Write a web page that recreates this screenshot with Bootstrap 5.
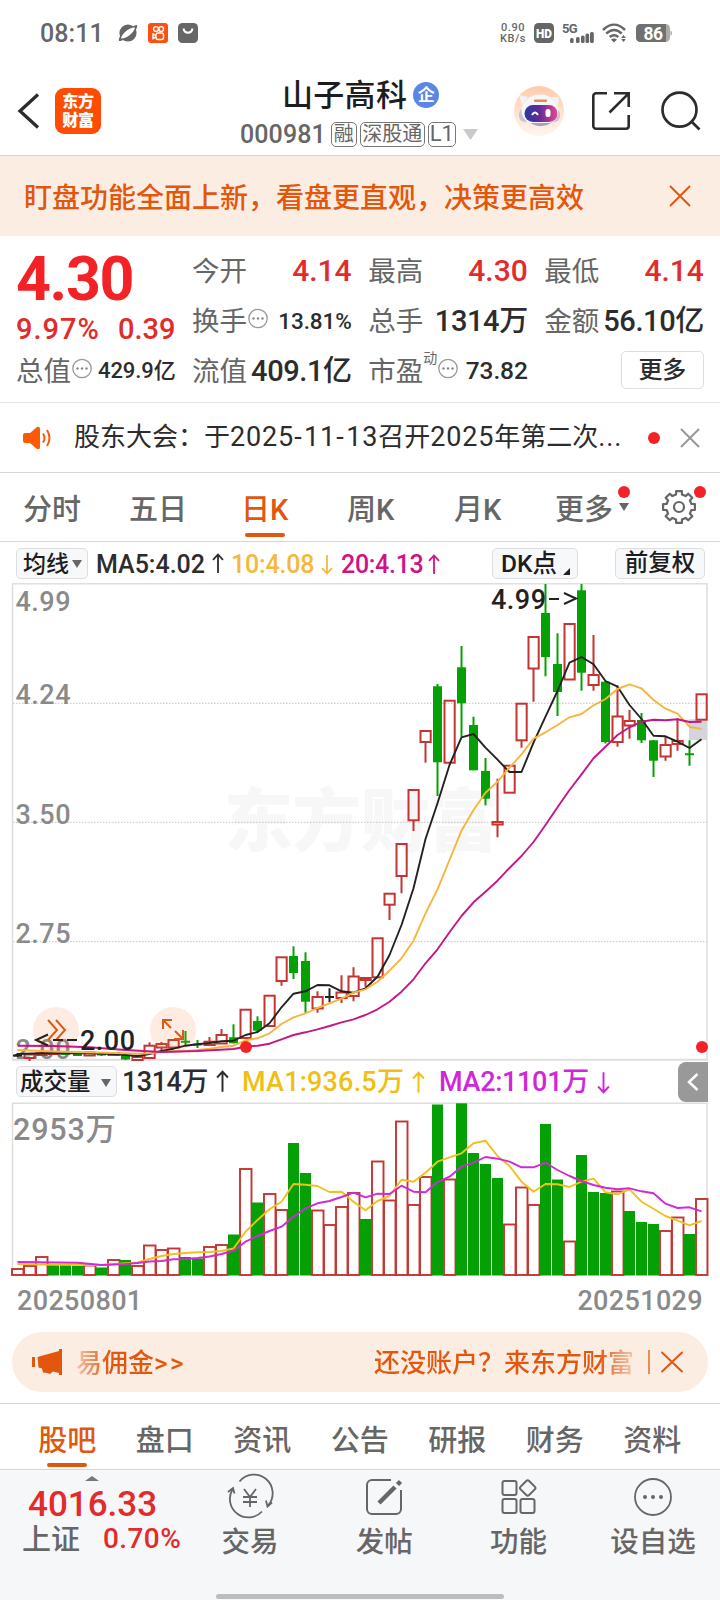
<!DOCTYPE html>
<html lang="zh-CN">
<head>
<meta charset="utf-8">
<meta name="viewport" content="width=device-width, initial-scale=1">
<title>山子高科 000981</title>
<link href="https://cdn.jsdelivr.net/npm/bootstrap@5.3.0/dist/css/bootstrap.min.css" rel="stylesheet">
<style>
:root{--or:#e2570e;--red:#e32b2b;--g6:#666;--ink:#2c2c2e}
body{width:720px;height:1600px;overflow:hidden;background:#fff;color:var(--ink);font-family:Roboto,"Noto Sans CJK SC",sans-serif;font-weight:400;line-height:1}
svg{display:block;flex:none;overflow:visible}
span,b,div{white-space:nowrap}
.statusrow{height:66px;padding:0 48px 0 40px;color:var(--g6)}
.clock{font-size:25px;font-weight:500;width:78px;letter-spacing:.1px}
.speed{font-size:11px;line-height:11px;font-weight:500;width:28px;letter-spacing:.5px}
.speed span{display:block;height:11px}
.header{height:90px;border-bottom:1px solid #d6d6d6}
.apptile{width:46px;height:46px;border-radius:9px;background:#ff4c04;color:#fff;font-size:16px;font-weight:900;line-height:19px;padding-top:4px;letter-spacing:-.2px}
.stockname{font-size:31px;line-height:38px;font-weight:500;color:#1d1d1f;letter-spacing:.3px;padding-top:2px}
.corp{width:26px;height:26px;border-radius:50%;background:#5c86e6;color:#fff;font-size:17px;font-weight:700;margin-left:6px}
.code{font-size:25px;font-weight:500;letter-spacing:.1px;color:var(--g6)}
.mk{border:1.3px solid #777;border-radius:5px;font-size:20px;height:25px;line-height:22px;color:var(--g6);text-align:center}
.notice{height:80px;background:#fcede3;color:var(--or);font-size:28px;font-weight:500;padding:0 28px 0 24px}
.notice span{padding-top:6px}
.quote{height:167px;border-bottom:1px solid #e8e8e8;padding:9px 16px 0 17px;display:grid;grid-template-columns:repeat(4,158.6px);column-gap:17.5px;grid-template-rows:50px 50px 50px}
.lbl{font-size:27.5px;color:var(--g6);font-weight:400;padding-top:3px;margin-left:-1px}
.v{font-weight:500;font-size:29px;letter-spacing:-.4px;padding-top:2px}
.v.rd{color:var(--red);font-size:30px;letter-spacing:0}
.v.sm{font-size:22.5px;letter-spacing:-.1px}
.quote svg{margin-left:1px}
.bigp{font-size:61px;font-weight:700;color:#f22226;line-height:68px;letter-spacing:-1.4px;margin-left:-1px}
.chg{font-size:29px;font-weight:500;color:var(--red);line-height:32px;margin-left:-1px}
.morebtn{width:83px;height:38px;border:1px solid #ddd;border-radius:5px;font-size:24px;font-weight:500;margin-left:auto}
.news{height:70px;border-bottom:1px solid #d6d6d6;padding:0 20px 0 22px;font-size:26px}
.news i{font-style:normal;font-size:27px;letter-spacing:.85px}
.dot{width:12px;height:12px;border-radius:50%;background:#f22226;flex:none}
.periods{height:69px;border-bottom:1px solid #d6d6d6;font-size:29px;color:var(--g6);font-weight:500;padding-left:23px}
.periods>div{position:relative;line-height:69px;height:69px;padding-top:3px}
.active{color:var(--or)}
.active::after{content:"";position:absolute;left:50%;margin-left:-20px;width:40px;height:4px;border-radius:2px;background:var(--or)}
.periods .active::after{top:57px}
.pill{background:#f6f8fa;border:1px solid #dcdee2;border-radius:5px;height:31px;font-weight:500;color:#1d1d1f;padding-top:2px}
.marow{height:41px;font-size:25px;font-weight:500;padding:1px 0 0 16px}
.marow>span:not(.pill),.volrow>span:not(.pill):not(.handle){padding-top:2px}
.volrow{height:43px;font-size:27px;font-weight:500;padding-left:16px}
.handle{width:30px;height:40px;background:#999;border-radius:8px 0 0 8px}
.dates{height:56px;font-size:27px;font-weight:500;color:#8a8a8a;padding:12px 17px 0 17px;letter-spacing:.35px}
.promo{height:60px;margin:0 12px;border-radius:30px;background:#fcede3;color:var(--or);font-size:26px;font-weight:500;padding-left:20px}
.promo span{padding-top:2px}
.fadel{background:linear-gradient(90deg,#e2570e40 0,#e2570e 32px);-webkit-background-clip:text;color:transparent}
.fader{background:linear-gradient(90deg,#e2570e 225px,#e2570e30 262px);-webkit-background-clip:text;color:transparent}
.sections{height:67px;margin-top:11px;border-top:1px solid #d6d6d6;border-bottom:1px solid #d6d6d6;font-size:29px;font-weight:500;color:var(--g6);padding:0 18px 0 19px}
.sections>div{width:97.5px;text-align:center;line-height:75px;position:relative;margin-left:-.5px;margin-right:.5px}
.sections .active::after{top:59px}
.dock{height:131px;background:#f6f7f9;color:var(--g6);position:relative}
.dock .ico{width:134.3px;font-size:28.5px;font-weight:500;padding-top:7px}
.dock .ico span{margin-top:12px}
.home{position:absolute;left:216px;bottom:2px;width:288px;height:5px;border-radius:3px;background:#bdbdbf}
</style>
</head>
<body>
<div class="statusrow d-flex align-items-center">
  <span class="clock">08:11</span>
  <svg width="20" height="20" viewBox="0 0 20 20"><circle cx="10" cy="10" r="8.6" fill="#666"/><path d="M1 18C-1 13 12 3 19 2c2 5-11 16-18 16z" fill="#666"/><path d="M3 15.500C4 10 12 4 17 4.500 16 10 8 16 3 15.500z" fill="#fff"/></svg>
  <svg style="margin-left:10px" width="20" height="20" viewBox="0 0 20 20"><rect width="20" height="20" rx="3" fill="#fa5011"/><g fill="none" stroke="#fff" stroke-width="1.400"><circle cx="8" cy="6" r="2.400"/><circle cx="13.200" cy="6" r="2.400"/><rect x="8" y="10" width="7.500" height="6.500" rx="2"/><path d="M8 12.500l-3-1.500v4.500l3-1.500"/></g></svg>
  <svg style="margin-left:10px" width="20" height="20" viewBox="0 0 20 20"><rect width="20" height="20" rx="4.500" fill="#666"/><path d="M5.500 5.500c1 5.500 8 5.500 9 0" fill="none" stroke="#fff" stroke-width="2"/></svg>
  <div class="speed ms-auto text-center"><span>0.90</span><span>KB/s</span></div>
  <svg style="margin-left:7px" width="20" height="20" viewBox="0 0 20 20"><rect width="20" height="20" rx="4.500" fill="#666"/><text x="2" y="14.500" font-size="12.500" font-weight="900" fill="#fff" textLength="16" lengthAdjust="spacingAndGlyphs">HD</text></svg>
  <svg style="margin-left:8px" width="32" height="20" viewBox="0 0 32 20" fill="#666"><text x="0" y="9.500" font-size="13" font-weight="700" textLength="15.500">5G</text><rect x="8" y="15" width="3.600" height="5" rx="1.500"/><rect x="14" y="14" width="3.600" height="6" rx="1.500"/><rect x="19" y="12.500" width="3.600" height="7.500" rx="1.500"/><rect x="23.500" y="10.500" width="3.600" height="9.500" rx="1.500"/><rect x="28" y="9" width="3.800" height="11" rx="1.500"/></svg>
  <svg style="margin-left:8px" width="24" height="20" viewBox="0 0 24 20"><g fill="none" stroke="#666" stroke-width="2.500"><path d="M1 7C8 0 16 0 23 7M4.300 10.500c5-4.500 10.500-4.500 15.400 0M7.700 14c3-2.500 5.500-2.500 8.600 0"/></g><path d="M12 19.500l-3-3q3-2 6 0zM21.500 12l2.300 3h-4.600zM21.500 19l2.300-3h-4.600z" fill="#666"/></svg>
  <svg style="margin-left:10px" width="36" height="20" viewBox="0 0 36 20"><rect y="1" width="34" height="18" rx="4.500" fill="#aaa"/><path d="M4.500 1H30v18H4.500A4.500 4.500 0 0 1 0 14.500v-9A4.500 4.500 0 0 1 4.500 1z" fill="#707070"/><path d="M34.500 7.500q1.500 0 1.500 2.500t-1.500 2.500z" fill="#aaa"/><text x="7.500" y="16.500" font-size="17.500" font-weight="700" fill="#fff" textLength="19.500">86</text></svg>
</div>

<div class="header d-flex">
  <svg style="margin:27px 0 0 17px" width="22" height="36" viewBox="0 0 22 36"><path d="M21 1.500L3 18l18 16.500" fill="none" stroke="#2c2c2e" stroke-width="3.300"/></svg>
  <div class="apptile text-center" style="margin:22px 0 0 16px">东方<br>财富</div>
  <div class="d-flex flex-column" style="margin:9px 0 0 139px;width:251px">
    <div class="d-flex align-items-center" style="margin-left:42px;height:40px"><span class="stockname">山子高科</span><span class="corp d-flex align-items-center justify-content-center">企</span></div>
    <div class="d-flex align-items-center" style="height:36px;margin-top:1px"><span class="code">000981</span><span class="mk" style="width:26px;margin-left:5px">融</span><span class="mk" style="width:65px;margin-left:3px">深股通</span><span class="mk" style="width:28px;margin-left:3px;font-size:22px">L1</span><svg style="margin-left:7px" width="15" height="11"><path d="M0 0h15l-7.500 11z" fill="#c9c9c9"/></svg></div>
  </div>
  <svg style="margin:19px 0 0 23px" width="50" height="52" viewBox="0 0 50 52"><defs><linearGradient id="bg1" x1="0" y1="0" x2="0" y2="1"><stop offset="0" stop-color="#ffcbab"/><stop offset="1" stop-color="#fff5f0"/></linearGradient><linearGradient id="bg2"><stop offset="0" stop-color="#293a9c"/><stop offset=".45" stop-color="#632a98"/><stop offset="1" stop-color="#e4488f"/></linearGradient></defs><circle cx="25" cy="26" r="25" fill="url(#bg1)"/><path d="M5 10l9 2-6 8zM45 12l-8 0 7 8z" fill="#f3f2f5"/><rect x="5" y="23" width="41" height="14" rx="6" fill="#c7c5d2"/><ellipse cx="26" cy="25.500" rx="18.500" ry="16" fill="#f6f5f7"/><path d="M11 34q15 14 30 1l-5 3H16z" fill="#a9a4b5"/><rect x="10.500" y="20" width="33" height="17" rx="8.500" fill="url(#bg2)"/><path d="M18 30q3-5 6 0" fill="none" stroke="#fff" stroke-width="2"/><rect x="31.500" y="24" width="5" height="8" rx="2.500" fill="#fff"/><rect x="20" y="14.500" width="13" height="2.400" rx="1" fill="#df8c54"/></svg>
  <svg style="margin:26px 0 0 28px" width="38" height="38" viewBox="0 0 38 38" fill="none" stroke="#2c2c2e" stroke-width="2.600"><path d="M15 1.300H4A2.700 2.700 0 0 0 1.300 4v30A2.700 2.700 0 0 0 4 36.700h30a2.700 2.700 0 0 0 2.700-2.700V23M22 1.300h14.700V15M36.700 1.300L17.500 20.500"/></svg>
  <svg style="margin:25px 0 0 31px" width="40" height="40" viewBox="0 0 40 40" fill="none" stroke="#2c2c2e" stroke-width="2.700"><circle cx="18.500" cy="18.700" r="17"/><path d="M30.500 30.500l8 8"/></svg>
</div>

<div class="notice d-flex align-items-center justify-content-between"><span>盯盘功能全面上新，看盘更直观，决策更高效</span><svg width="24" height="24" viewBox="0 0 24 24"><path d="M2 2l20 20M22 2L2 22" stroke="#e2570e" stroke-width="2"/></svg></div>

<div class="quote">
  <div style="grid-row:1/3"><div class="bigp">4.30</div><div class="chg d-flex justify-content-between"><span style="letter-spacing:1px">9.97%</span><span>0.39</span></div></div>
  <div class="d-flex align-items-center justify-content-between"><span class="lbl">今开</span><span class="v rd">4.14</span></div>
  <div class="d-flex align-items-center justify-content-between"><span class="lbl">最高</span><span class="v rd">4.30</span></div>
  <div class="d-flex align-items-center justify-content-between"><span class="lbl">最低</span><span class="v rd">4.14</span></div>
  <div class="d-flex align-items-center"><span class="lbl">换手</span><svg width="20" height="20" viewBox="0 0 20 20"><use href="#ell"/></svg><span class="v sm ms-auto">13.81%</span></div>
  <div class="d-flex align-items-center justify-content-between"><span class="lbl">总手</span><span class="v">1314万</span></div>
  <div class="d-flex align-items-center justify-content-between"><span class="lbl">金额</span><span class="v">56.10亿</span></div>
  <div class="d-flex align-items-center"><span class="lbl">总值</span><svg width="20" height="20" viewBox="0 0 20 20"><g id="ell"><circle cx="10" cy="8.500" r="9.200" fill="none" stroke="#999" stroke-width="1.300"/><g fill="#888"><circle cx="5.500" cy="8.500" r="1.200"/><circle cx="10" cy="8.500" r="1.200"/><circle cx="14.500" cy="8.500" r="1.200"/></g></g></svg><span class="v sm ms-auto" style="font-size:22px">429.9亿</span></div>
  <div class="d-flex align-items-center justify-content-between"><span class="lbl">流值</span><span class="v">409.1亿</span></div>
  <div class="d-flex align-items-center"><span class="lbl">市盈</span><span style="font-size:14px;align-self:flex-start;margin-top:6px;color:#666">动</span><svg width="20" height="20" viewBox="0 0 20 20"><use href="#ell"/></svg><span class="v sm ms-auto" style="font-size:24.500px">73.82</span></div>
  <div class="d-flex align-items-center"><span class="morebtn d-flex align-items-center justify-content-center">更多</span></div>
</div>

<div class="news d-flex align-items-center">
  <svg width="30" height="24" viewBox="0 0 30 24"><path d="M1 9q0-2 2-2h5l7-6q3-1 3 2v18q0 3-3 2l-7-6H3q-2 0-2-2z" fill="#fb5b08"/><path d="M21 7.500q3 4.500 0 9M25 4q5 8 0 16" fill="none" stroke="#fb5b08" stroke-width="2"/></svg>
  <span style="margin-left:22px">股东大会：于<i>2025<i style="letter-spacing:2.500px">-</i>11<i style="letter-spacing:2.500px">-</i>13</i>召开<i>2025</i>年第二次<i>...</i></span>
  <span class="dot ms-auto"></span>
  <svg style="margin-left:20px" width="20" height="20" viewBox="0 0 20 20"><path d="M1 1l18 18M19 1L1 19" stroke="#999" stroke-width="2"/></svg>
</div>

<div class="periods d-flex align-items-center">
  <div style="width:106px">分时</div><div style="width:113px">五日</div><div style="width:105px"><div class="active position-relative" style="width:48px;height:66px;line-height:69px;margin-left:-1px">日K</div></div><div style="width:107px">周K</div><div style="width:101px">月K</div>
  <div style="width:106px">更多<span class="dot position-absolute" style="left:63px;top:13px"></span><svg class="position-absolute" style="left:64px;top:30px" width="10" height="8"><path d="M0 0h10L5 8z" fill="#666"/></svg></div>
  <div><svg style="margin-top:13px" width="36" height="36" viewBox="-18 -18 36 36"><path id="gear" fill="none" stroke="#666" stroke-width="2.200" stroke-linejoin="round"/><circle r="5" fill="none" stroke="#666" stroke-width="2.200"/></svg><span class="dot position-absolute" style="left:33px;top:13px"></span></div>
</div>

<svg width="0" height="0" class="position-absolute"><defs><path id="up" d="M6 20V1.500M1 6.800L6 1.500l5 5.300" fill="none" stroke="currentColor" stroke-width="1.800"/><path id="dn" d="M6 1v18.500M1 14.200l5 5.300 5-5.300" fill="none" stroke="currentColor" stroke-width="1.800"/></defs></svg>

<div class="marow d-flex align-items-center">
  <span class="pill d-flex align-items-center" style="width:72px;font-size:23px;padding-left:6px">均线<svg style="margin-left:3px" width="10" height="8"><path d="M0 0h10L5 8z" fill="#666"/></svg></span>
  <span style="margin-left:8px;width:116px">MA5:4.02</span><svg width="12" height="21"><use href="#up"/></svg>
  <span class="d-flex" style="color:#f5b83d;margin-left:7px"><span style="width:90px;letter-spacing:-.2px">10:4.08</span><svg width="12" height="21" style="margin-top:2px"><use href="#dn"/></svg></span>
  <span class="d-flex" style="color:#d01285;margin-left:8px"><span style="width:87px;letter-spacing:-.3px">20:4.13</span><svg width="12" height="21" style="margin-top:2px"><use href="#up"/></svg></span>
  <span class="pill d-flex align-items-center" style="margin-left:52px;width:86px;padding-left:8px;font-size:24.500px">DK点<svg style="margin:14px 0 0 6px" width="7" height="7"><path d="M7 0v7H0z" fill="#222"/></svg></span>
  <span class="pill d-flex align-items-center justify-content-center" style="margin-left:37px;width:90px;font-size:23.500px">前复权</span>
</div>

<svg id="price" width="720" height="477" viewBox="0 583 720 477"></svg>

<div class="volrow d-flex align-items-center">
  <span class="pill d-flex align-items-center" style="width:101px;font-size:23.500px;padding-left:3px">成交量<svg style="margin-left:10px" width="10" height="8"><path d="M0 0h10L5 8z" fill="#666"/></svg></span>
  <span style="margin-left:5px;width:94px;letter-spacing:-.5px">1314万</span><svg width="13" height="23" viewBox="0 0 12 21"><use href="#up"/></svg>
  <span class="d-flex" style="color:#f0bf14;margin-left:13px"><span style="width:170px;letter-spacing:.2px">MA1:936.5万</span><svg width="13" height="23" viewBox="0 0 12 21" style="margin-top:2px"><use href="#up"/></svg></span>
  <span class="d-flex" style="color:#d027d8;margin-left:14px"><span style="width:158px;letter-spacing:-.3px">MA2:1101万</span><svg width="13" height="23" viewBox="0 0 12 21" style="margin-top:2px"><use href="#dn"/></svg></span>
  <span class="handle d-flex align-items-center justify-content-center ms-auto" style="margin-right:12px"><svg width="12" height="18"><path d="M10.500 1L2 9l8.500 8" fill="none" stroke="#fff" stroke-width="2.500"/></svg></span>
</div>

<svg id="volume" width="720" height="173" viewBox="0 1103 720 173"></svg>

<div class="dates d-flex justify-content-between"><span>20250801</span><span>20251029</span></div>

<div class="promo d-flex align-items-center">
  <svg width="30" height="27" viewBox="0 0 30 27" fill="#e2570e"><path d="M0 8h3v10H0zM5.500 8L27 2V0h3v26h-3v-2l-6-1.500-3 2.500-3-1-4-.5-1-4-3.500-1z"/></svg>
  <span class="fadel" style="margin-left:14px">易佣金<span style="letter-spacing:2.500px">&gt;&gt;</span></span>
  <span class="fader ms-auto">还没账户？来东方财富</span>
  <svg style="margin:0 25px 0 13px" width="36" height="26" viewBox="0 0 36 26"><path d="M2 1v24" stroke="#e2570e" stroke-width="1.300"/><path d="M14.500 3l21 20M35.500 3l-21 20" stroke="#e2570e" stroke-width="2"/></svg>
</div>

<div class="sections d-flex"><div class="active">股吧</div><div>盘口</div><div>资讯</div><div>公告</div><div>研报</div><div>财务</div><div>资料</div></div>

<div class="dock d-flex">
  <div style="width:183px;color:var(--red);font-weight:500">
    <svg style="margin:6px 0 0 85px" width="14" height="5"><path d="M0 5L7 0l7 5z" fill="#777"/></svg>
    <div style="font-size:35px;line-height:44px;margin:2px 0 0 28px">4016.33</div>
    <div class="d-flex align-items-center" style="height:32px;margin:-4px 0 0 22px;font-size:28px"><span style="color:#666;font-size:29px;padding-top:2px">上证</span><span style="margin-left:23px;letter-spacing:.4px">0.70%</span></div>
  </div>
  <div class="ico d-flex flex-column align-items-center"><svg width="44" height="40" viewBox="-22 -20 44 40" fill="none" stroke="#666" stroke-width="1.800"><path d="M-10.500-15.500A18.500 18.500 0 0 1 18.500 8M22 5.500l-4.500 4-1.500-6M12 14.500A18.500 18.500 0 0 1-17.500-7.500M-22-5l5-4 1.500 5.500M-6-8L0 0l6-8M0 0v10M-7 0H7M-7 5H7"/></svg><span>交易</span></div>
  <div class="ico d-flex flex-column align-items-center"><svg width="40" height="40" viewBox="-20 -20 40 40" fill="none" stroke="#666" stroke-width="2"><path d="M7-17h-19a5 5 0 0 0-5 5v24a5 5 0 0 0 5 5h24a5 5 0 0 0 5-5V-7"/><path d="M-5 6L11-10M13.500-12.500l3-3" stroke-width="4.500"/></svg><span>发帖</span></div>
  <div class="ico d-flex flex-column align-items-center"><svg width="40" height="40" viewBox="-20 -20 40 40" fill="none" stroke="#666" stroke-width="2"><rect x="-16.500" y="-16" width="14" height="14" rx="2"/><rect x="-16.500" y="2" width="14" height="14" rx="2"/><rect x="1.500" y="2" width="14" height="14" rx="2"/><rect x="2.700" y="-15" width="12" height="12" rx="2" transform="rotate(45 8.700 -9)"/></svg><span>功能</span></div>
  <div class="ico d-flex flex-column align-items-center"><svg width="40" height="40" viewBox="-20 -20 40 40"><circle r="18" fill="none" stroke="#666" stroke-width="1.800"/><g fill="#666"><circle cx="-8" r="2"/><circle r="2"/><circle cx="8" r="2"/></g></svg><span>设自选</span></div>
  <div class="home"></div>
</div>

<script src="https://cdn.jsdelivr.net/npm/bootstrap@5.3.0/dist/js/bootstrap.bundle.min.js"></script>
<script>
const RED='#c43531', GREEN='#05a005', X=i=>17.5+12*i;
// gear outline with eight rounded teeth
(()=>{let p=[];for(let k=0;k<8;k++){const a=k*Math.PI/4-Math.PI/2;[[-.24,12.800],[-.18,16.200],[.18,16.200],[.24,12.800]].forEach(([d,r])=>p.push((Math.cos(a+d)*r).toFixed(1)+' '+(Math.sin(a+d)*r).toFixed(1)))}
document.getElementById('gear').setAttribute('d','M'+p.join('L')+'Z')})();

// candles: colour, body top, body bottom, high, low
const candles=[['k',1055.5,1055.5,1054,1057],['r',1054.5,1058,1054,1061],['r',1053.5,1055,1053,1056],['r',1053,1054,1052,1055],['g',1053,1055,1053,1055],['g',1053,1056,1052,1056],['r',1052.5,1055.5,1052,1056],['g',1053.5,1055.5,1052,1056],['r',1053,1055,1052,1056],['g',1054.5,1059.5,1054,1060],['r',1057,1060,1056,1060],['r',1045.7,1058,1042.3,1058],['r',1044,1047.5,1042,1050.5],['r',1040,1047.5,1040,1048],['g',1041.7,1041.7,1031,1045.7],['g',1044.5,1044.5,1040,1048],['r',1041.7,1045,1037,1045.7],['r',1035,1043.5,1029,1044],['g',1037.3,1043.3,1024.3,1043.3],['r',1009.7,1038,1009,1038],['g',1021,1030.7,1016.3,1032],['r',995.7,1026,995,1026],['r',957.3,981,957,985.7],['g',956,973,946.3,979],['g',961,1001.7,952.3,1012.7],['r',997,1008.5,991.3,1012.7],['k',997,997,988.3,1002.3],['r',992.5,998,975.3,1003],['r',976.5,996,967.3,1001.3],['r',978,980,977,986.7],['r',938.3,977.3,938,977.5],['r',893.7,904.7,893,920],['r',844,876,843,893.3],['r',790,820.3,790,831],['r',731,742,731,762.7],['g',686.3,762.3,684,796],['r',700.7,762.7,700,763],['g',667.3,703.3,646,736.7],['g',725,770.3,716.7,770.3],['g',771,798.7,758,805.3],['r',822,824.5,778.7,837.3],['r',765.7,792.7,765,793],['r',703.7,740.3,703,747.7],['r',637,668.5,636,701.7],['g',613,657,584,676.3],['g',664,692,633.3,716],['r',624,679.5,623.7,680],['g',590.3,672.7,584,690.7],['r',675,685,635,690.7],['g',681.7,742,681,743.5],['r',716.5,742,685.3,746.7],['r',721,725.5,710,738.7],['g',720,740.3,713,743],['g',740.3,760.7,740,777],['r',745,756.5,736.7,760.7],['r',741,744,718.3,750.7],['g',754.3,754.3,740.3,765.7],['r',694.3,719.7,694,720]];
const line=(pts,c,w)=>`<polyline fill="none" stroke="${c}" stroke-width="${w}" stroke-linejoin="round" points="${pts.map(([i,y])=>X(i)+','+y).join(' ')}"/>`;
const from=(s,a)=>a.map((y,k)=>[s+k,y]);
const ma5=[[-.3,1056.3],[0,1054],[2,1053.3],[5,1053],[8,1054],...from(10,[1056,1054,1051,1048.7,1045.7,1044.3,1043,1041.3,1040.7,1035,1032,1023.3,1007.3,993.7,991.3,985,985.3,991.3,992.7,988.3,976.7,955,925,888.3,839,803.3,765,737.3,734,747.7,759.7,772,772,742.7,716.7,691,662.7,657,664.3,681,686.7,705,719,735.7,736.3,741.7,748,739.3])];
const ma10=[[0,1050],[3,1051.5],[9,1053.3],...from(10,[1053.7,1053.3,1052,1051.5,1051,1050,1048.7,1047,1045.7,1040.3,1038.3,1033.3,1024,1017.3,1013.3,1008,1003.3,998.7,992.7,989.3,981.7,970.7,958.3,940.7,913.3,889.3,860,830.7,810,792.7,781.7,767.7,754.3,738.7,732.3,725,717.3,714,705.3,699,689,684.3,688.3,700,708.7,713.7,726.7,729])];
const ma20=[[0,1045.7],[3,1046],[6,1047.3],[9,1050],[12,1052],[15,1051],...from(18,[1049,1046.7,1045.7,1043.7,1039.3,1035,1032.3,1029.3,1026,1022.3,1019.3,1015,1009.3,1001.7,991.7,979.3,963.3,949.3,932.3,916,902.3,891.7,880.7,868,856,842,825,807.3,790,774.3,758.3,746.7,735,727.3,721.7,719.7,720.3,719.3,722,721.7])];
const txt=(x,y,s,size,len,c,extra='')=>`<text x="${x}" y="${y}" font-size="${size}" textLength="${len}" fill="${c}" ${extra}>${s}</text>`;
let h=txt(224,846,'东方财富',69,274,'#f7f7f7','font-weight="900"');
h+='<path d="M12.500 1060V583.700H707V1060" fill="none" stroke="#dedede" stroke-width="1.500"/><path d="M12 1059.700H708" stroke="#dedede" stroke-width="2"/>';
[703.3,822.3,941.7].forEach(y=>h+=`<path d="M13 ${y}H707" stroke="#c4c4c4" stroke-dasharray="1.500 1.500"/>`);
[['4.99',611],['4.24',704],['3.50',823.500],['2.75',943],['2.00',1058.500]].forEach(([s,y])=>h+=txt(15.500,y,s,27,55,'#8a8a8a','font-weight="500"'));
h+='<rect x="689" y="719.300" width="18" height="20.700" fill="#d3d5dc"/>';
candles.forEach(([t,a,b,hi,lo],i)=>{const x=X(i),c=t=='r'?RED:t=='g'?GREEN:'#222';
 if(b-a<.5)h+=`<path d="M${x-4.5} ${a}h9M${x} ${hi}V${lo}" stroke="${c}" stroke-width="2"/>`;
 else if(t=='r')h+=`<path d="M${x} ${hi}V${a}M${x} ${b}V${lo}" stroke="${c}" stroke-width="2"/><rect x="${x-5}" y="${a}" width="10.200" height="${b-a}" fill="none" stroke="${c}" stroke-width="2"/>`;
 else h+=`<path d="M${x} ${hi}V${lo}" stroke="${c}" stroke-width="2"/><rect x="${x-4.5}" y="${a}" width="9" height="${b-a}" fill="${c}"/>`;});
h+='<circle cx="56" cy="1030" r="23" fill="#fb7835" opacity=".14"/><circle cx="173" cy="1030" r="23" fill="#fb7835" opacity=".14"/><path d="M48 1020l9 10-9 10M56 1020l9 10-9 10M163 1029v-9h9M163 1020l8 8M175 1031l8 8M183 1030v9h-9" fill="none" stroke="#d85a18" stroke-width="2"/>';
h+=line(ma5,'#222',1.9)+line(ma10,'#f7b53c',1.9)+line(ma20,'#c71585',1.9);
h+='<circle cx="246" cy="1047" r="6" fill="#f22226"/><circle cx="702" cy="1047" r="6" fill="#f22226"/>';
h+=txt(491,609,'4.99',27,55,'#222','font-weight="500"')+'<path d="M549 599h10M564 593l12 5.500-12 5.500" fill="none" stroke="#222" stroke-width="2"/>';
h+='<path d="M48 1034.500l-12 5.500 12 5.500M53 1040h10M67 1040h10" fill="none" stroke="#222" stroke-width="2"/>'+txt(80,1050,'2.00',27,55,'#222','font-weight="500"');
document.getElementById('price').innerHTML=h;

// volume bars: colour and top edge
const vt=[1269,1266,1257,1265,1265,1266,1265.5,1267.5,1260,1260,1266,1245.5,1250,1248.5,1257,1258.5,1247,1245,1234.5,1169,1202.5,1194,1210,1143,1173,1210.5,1225,1207,1193,1219,1161.5,1200.5,1121.5,1205,1177,1104.5,1179.5,1103.3,1153,1164,1178,1224.5,1187.5,1205,1124,1179.5,1241.5,1155,1192,1193,1191.5,1211,1222,1224,1231,1217.5,1234,1199];
const vc='rrrgggrgrgrrrrggrrgrgrrggrrrrgrrrrrgrggggrrrggrggg'.split('').concat('rgggrrgr'.split(''));
const v1=[[0,1264],[3,1264.7],[7,1265],[10,1262.5],...from(11,[1259,1256,1254,1253,1252.3,1252,1251,1248.5,1231.7,1220,1209.3,1201.7,1184,1184.7,1186,1192,1191.7,1201.7,1210.3,1201,1196,1179.7,1181.7,1172.7,1161.7,1157.3,1153.3,1143.3,1140.7,1156,1166,1181.7,1191.7,1184,1184.3,1187,1181.7,1178.7,1192.3,1194.3,1189.3,1201.7,1208.7,1216,1220.7,1225.3,1221])];
const v2=[[0,1262],[5,1262.7],[7,1265],[9,1264],...from(10,[1263,1261.5,1261,1259.3,1259,1258,1256.5,1254,1250.7,1241.7,1236,1231,1226.7,1216.7,1208.3,1203.3,1201,1197,1192.7,1197.3,1193.7,1194,1185.7,1191.7,1192.3,1182,1176.7,1166.7,1162.7,1157,1158.7,1161.7,1167.3,1167.3,1162.7,1170,1176,1181,1185,1187.7,1189.3,1188.3,1191.3,1193.3,1203.7,1208,1207.3,1211.3])];
let v='<path d="M12.500 1275V1103.300H707V1275" fill="none" stroke="#dedede" stroke-width="1.500"/>';
vt.forEach((y,i)=>{const x=X(i);v+=vc[i]=='r'?`<rect x="${x-5.5}" y="${y}" width="11.500" height="${1275-y}" fill="none" stroke="${RED}" stroke-width="1.900"/>`:`<rect x="${x-5.5}" y="${y}" width="11" height="${1275.5-y}" fill="${GREEN}"/>`});
v+=line(v1,'#f0c11c',1.9)+line(v2,'#cf2ad6',1.9)+txt(13,1140,'2953万',30.5,103,'#8a8a8a','font-weight="500"');
document.getElementById('volume').innerHTML=v;
</script>
</body>
</html>
